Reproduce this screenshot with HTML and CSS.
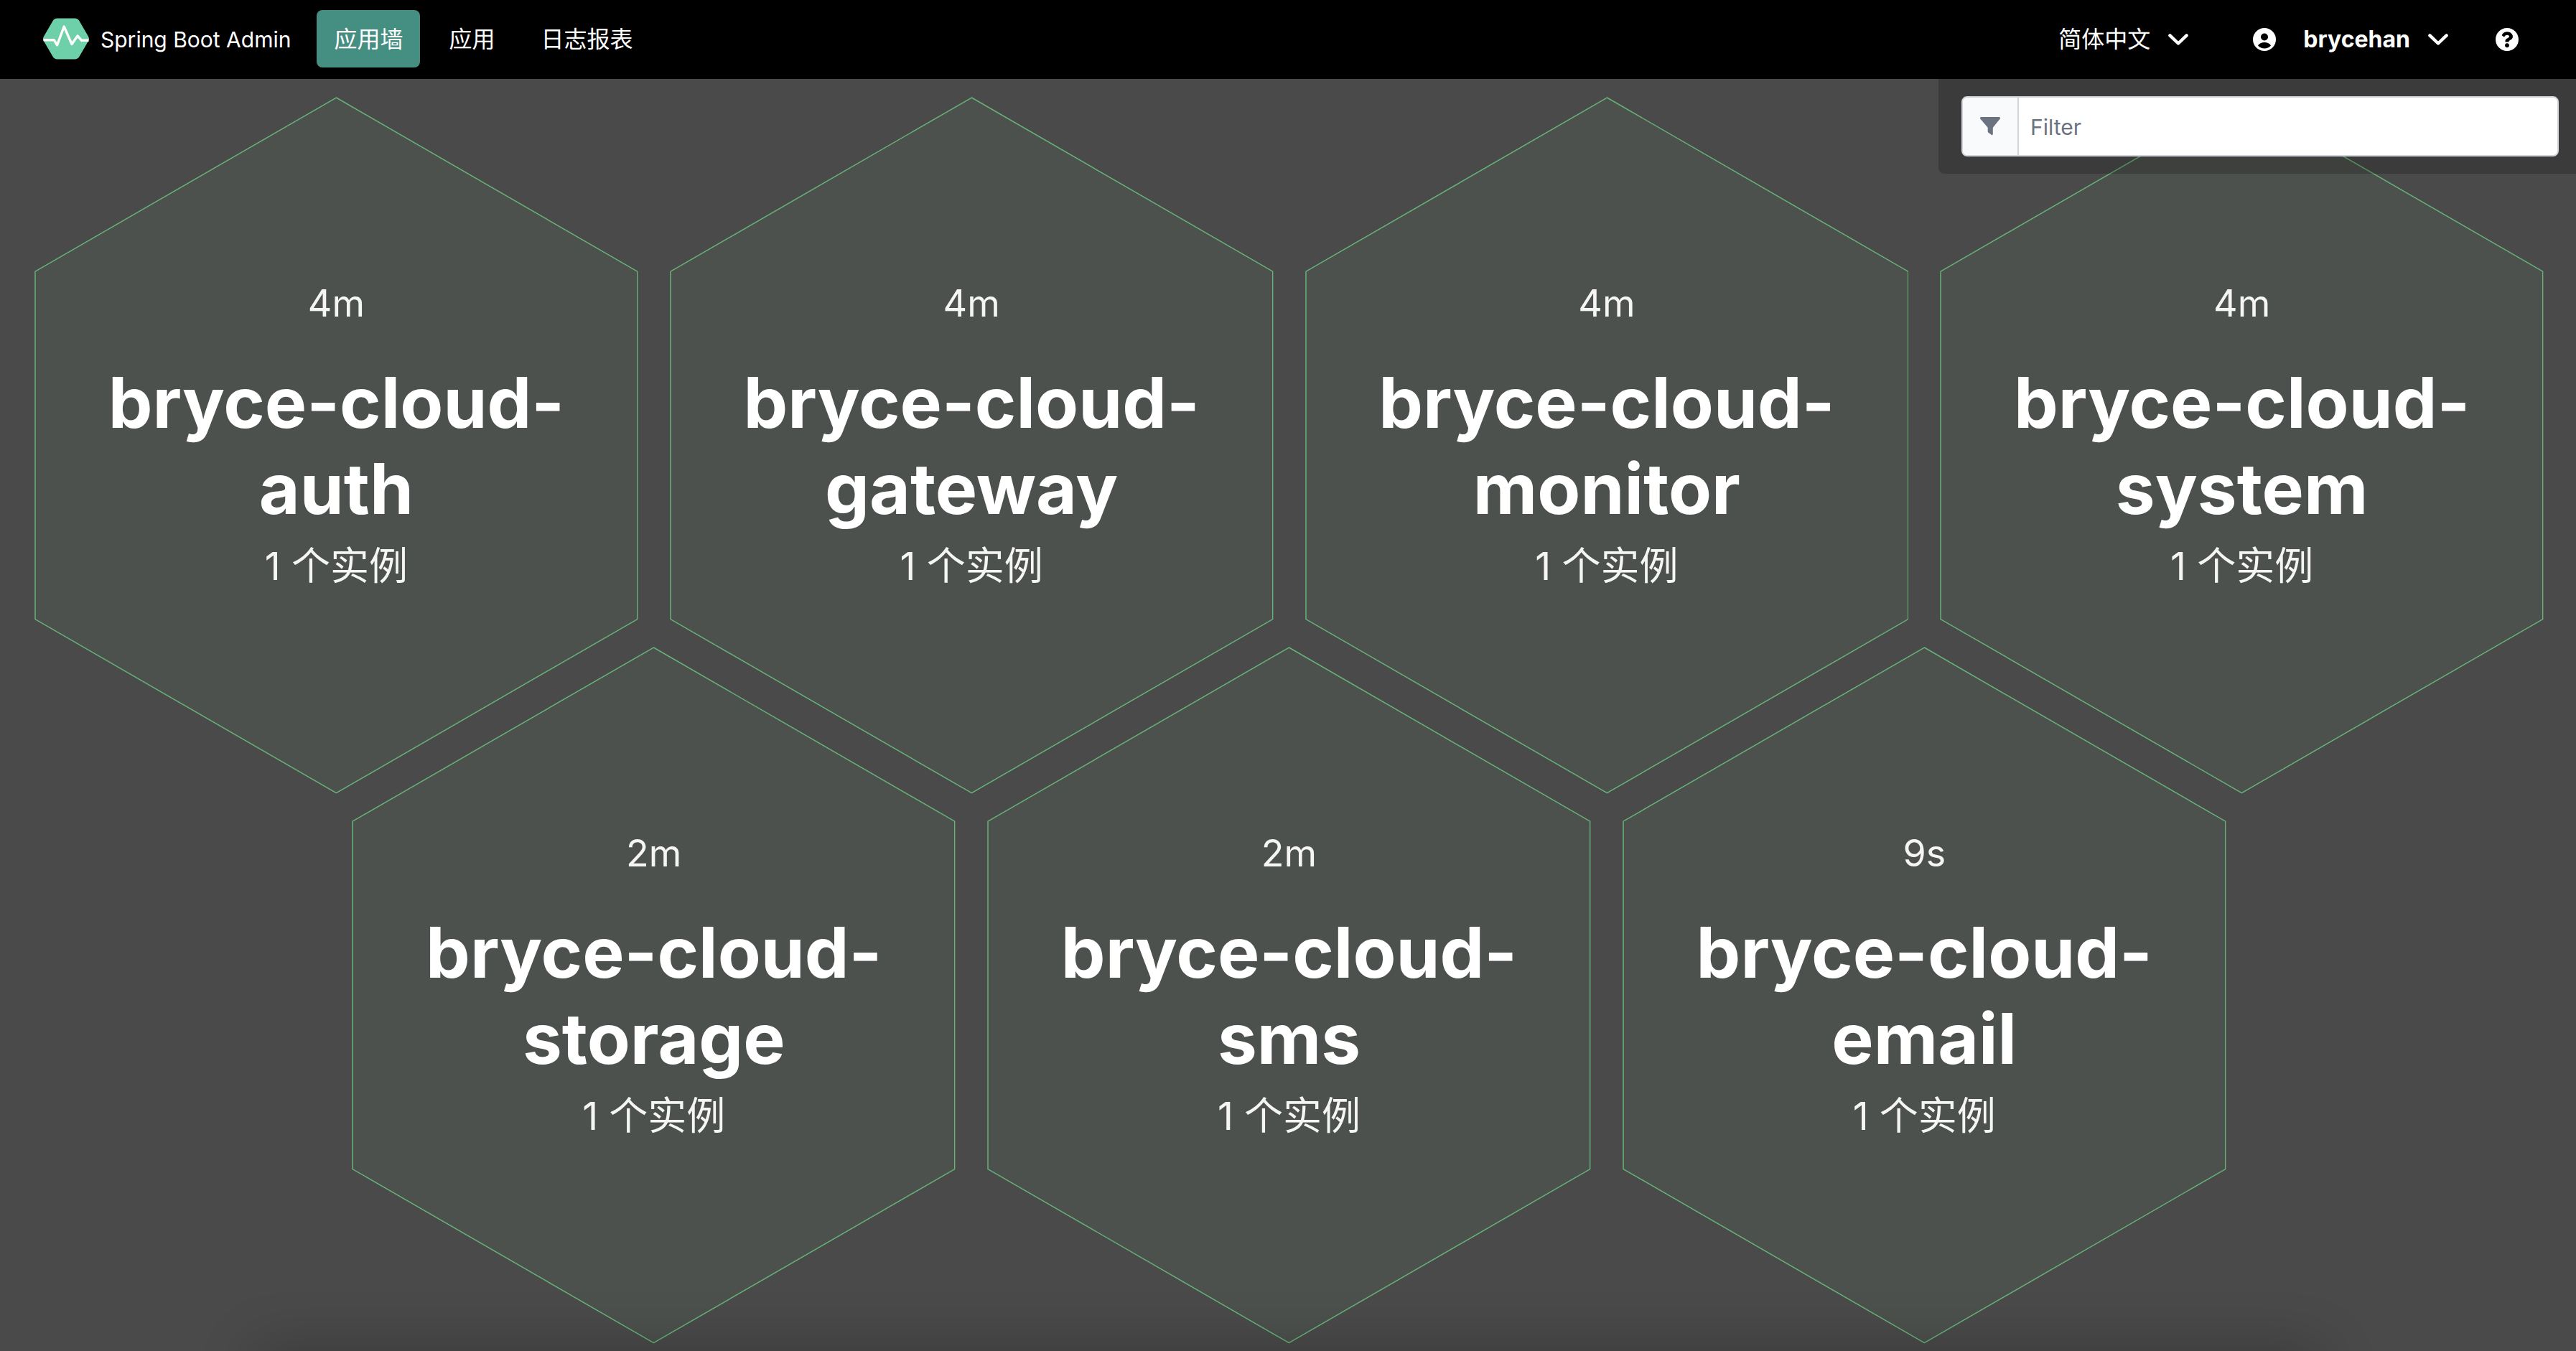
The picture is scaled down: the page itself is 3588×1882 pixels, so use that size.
FILE: index.html
```html
<!DOCTYPE html>
<html lang="zh-CN">
<head>
<meta charset="utf-8">
<meta name="viewport" content="width=device-width, initial-scale=1">
<title>Spring Boot Admin</title>
<link rel="stylesheet" href="styles.css">
</head>
<body>
<svg class="defs" width="0" height="0" aria-hidden="true">
  <symbol id="hex" viewBox="0 0 841 971" preserveAspectRatio="none">
    <polygon stroke-width="1.5" points="420.500,1 840,243.250 840,727.750 420.500,970 1,727.750 1,243.250"/>
  </symbol>
  <symbol id="chevron" viewBox="0 0 28 16">
    <path fill="none" stroke="#fff" stroke-width="4.400" stroke-linecap="round" stroke-linejoin="round" d="M2.400 2.400L14 13.500L25.600 2.400"/>
  </symbol>
</svg>
<header class="navbar">
  <a class="brand" href="#">
    <svg class="logo" viewBox="0 0 64 58" aria-hidden="true">
      <path fill="#6dd0a8" d="M20 0.500h24c3 0 5 1.200 6.500 3.700l12.500 21.500c1.300 2.200 1.300 4.400 0 6.600l-12.500 21.500c-1.500 2.500-3.500 3.700-6.500 3.700h-24c-3 0-5-1.200-6.500-3.700l-12.500-21.500c-1.300-2.200-1.300-4.400 0-6.600l12.500-21.500c1.500-2.500 3.500-3.700 6.500-3.700z"/>
      <path fill="none" stroke="#fff" stroke-width="3.400" stroke-linejoin="round" d="M0.500 30.800H15.300L19.600 37.800L29.200 12L40 36.500L48 25L53.500 31.200H63.500"/>
    </svg>
    <span>Spring Boot Admin</span>
  </a>
  <nav class="menu">
    <a class="item active" href="#wall">应用墙</a>
    <a class="item" href="#applications">应用</a>
    <a class="item" href="#journal">日志报表</a>
  </nav>
  <div class="tools">
    <button class="tool" type="button">简体中文 <svg class="chevron" aria-hidden="true"><use href="#chevron"/></svg></button>
    <button class="tool user" type="button">
      <svg class="glyph" viewBox="0 0 32 32" aria-hidden="true"><circle cx="16" cy="16" r="16" fill="#fff"/><circle cx="16" cy="12.500" r="5" fill="#000"/><path d="M7 24.500c1.500-3 5-4.500 9-4.500s7.500 1.500 9 4.500c-2.300 2.500-5.500 4-9 4s-6.700-1.500-9-4z" fill="#000"/></svg>
      <strong>brycehan</strong>
      <svg class="chevron" aria-hidden="true"><use href="#chevron"/></svg>
    </button>
    <button class="tool help" type="button" aria-label="Help">
      <svg class="glyph" viewBox="8 8 496 496" aria-hidden="true"><path fill="#fff" d="M504 256c0 136.997-111.043 248-248 248S8 392.997 8 256C8 119.083 119.043 8 256 8s248 111.083 248 248zM262.655 90c-54.497 0-89.255 22.957-116.549 63.758-3.536 5.286-2.353 12.415 2.715 16.258l34.699 26.310c5.205 3.947 12.621 3.008 16.665-2.122 17.864-22.658 30.113-35.797 57.303-35.797 20.429 0 45.698 13.148 45.698 32.958 0 14.976-12.363 22.667-32.534 33.976C247.128 238.528 216 254.941 216 296v4c0 6.627 5.373 12 12 12h56c6.627 0 12-5.373 12-12v-1.333c0-28.462 83.186-29.647 83.186-106.667 0-58.002-60.165-102-116.531-102zM256 338c-25.365 0-46 20.635-46 46 0 25.364 20.635 46 46 46s46-20.636 46-46c0-25.365-20.635-46-46-46z"/></svg>
    </button>
  </div>
</header>
<form class="filter" role="search">
  <div class="field">
    <label class="addon" for="filter"><svg viewBox="0 0 28 26" aria-label="Filter"><path fill="#6b7280" d="M1.500 0h25c1.400 0 2 1.500 1.200 2.600L17.800 14.800V24c0 1-1 1.500-1.800 1l-4.700-3.500c-.4-.3-.6-.7-.6-1.200V14.800L.3 2.600C-.5 1.500.1 0 1.500 0z"/></svg></label>
    <input id="filter" type="text" placeholder="Filter">
  </div>
</form>
<main class="wall">
  <div class="row">
    <a class="hex" href="#auth"><svg class="shape" aria-hidden="true"><use href="#hex"/></svg><span class="meta uptime">4m</span><h2>bryce-cloud-auth</h2><span class="meta">1 个实例</span></a>
    <a class="hex" href="#gateway"><svg class="shape" aria-hidden="true"><use href="#hex"/></svg><span class="meta uptime">4m</span><h2>bryce-cloud-gateway</h2><span class="meta">1 个实例</span></a>
    <a class="hex" href="#monitor"><svg class="shape" aria-hidden="true"><use href="#hex"/></svg><span class="meta uptime">4m</span><h2>bryce-cloud-monitor</h2><span class="meta">1 个实例</span></a>
    <a class="hex" href="#system"><svg class="shape" aria-hidden="true"><use href="#hex"/></svg><span class="meta uptime">4m</span><h2>bryce-cloud-system</h2><span class="meta">1 个实例</span></a>
  </div>
  <div class="row">
    <a class="hex" href="#storage"><svg class="shape" aria-hidden="true"><use href="#hex"/></svg><span class="meta uptime">2m</span><h2>bryce-cloud-storage</h2><span class="meta">1 个实例</span></a>
    <a class="hex" href="#sms"><svg class="shape" aria-hidden="true"><use href="#hex"/></svg><span class="meta uptime">2m</span><h2>bryce-cloud-sms</h2><span class="meta">1 个实例</span></a>
    <a class="hex" href="#email"><svg class="shape" aria-hidden="true"><use href="#hex"/></svg><span class="meta uptime">9s</span><h2>bryce-cloud-email</h2><span class="meta">1 个实例</span></a>
  </div>
</main>
</body>
</html>
```
FILE: styles.css
```css
* { box-sizing: border-box; }

body {
  margin: 0;
  min-height: 100vh;
  overflow-x: hidden;
  background: #4a4a4a;
  color: #fff;
  font: 32px/48px Inter, "Noto Sans CJK SC", sans-serif;
}

a { color: inherit; text-decoration: none; }

.defs { position: absolute; }

.navbar {
  display: flex;
  align-items: center;
  height: 110px;
  padding: 0 56px 2px 60px;
  background: #000;
}

.brand {
  display: flex;
  align-items: center;
  gap: 16px;
  margin-right: 36px;
  font-size: 30px;
}

.brand span { padding-top: 2px; }

.logo { width: 64px; height: 58px; }

.menu { display: flex; gap: 16px; }

.item {
  padding: 17px 24px 15px;
  border-radius: 8px;
}

.item.active { background: #458f82; }

.tools {
  display: flex;
  margin-left: auto;
}

.tool {
  display: flex;
  align-items: center;
  padding: 17px 24px 15px;
  border: 0;
  background: none;
  color: #fff;
  font: inherit;
}

.user { margin-left: 42px; }
.user strong { margin-left: 38px; font-weight: 700; }
.help { margin-left: 18px; }

.chevron {
  width: 28px;
  height: 16px;
  margin-left: 25px;
}

.glyph { width: 32px; height: 32px; }

.filter {
  position: absolute;
  z-index: 2;
  top: 110px;
  right: 0;
  width: 888px;
  padding: 24px 24px 24px 32px;
  border-radius: 0 0 0 8px;
  background: rgba(0, 0, 0, .2);
}

.field {
  display: flex;
  height: 84px;
  overflow: hidden;
  border: 2px solid #d1d5db;
  border-radius: 8px;
  background: #fff;
}

.addon {
  display: flex;
  align-items: center;
  justify-content: center;
  width: 78px;
  border-right: 2px solid #d1d5db;
  background: #f9fafb;
}

.addon svg { width: 28px; height: 26px; }

.field input {
  flex: 1;
  min-width: 0;
  padding: 2px 16px 0;
  border: 0;
  outline: 0;
  background: none;
  color: #111827;
  font: inherit;
  font-size: 30px;
}

.field input::placeholder { color: #6b7280; opacity: 1; }

.wall { padding: 25px 45px 8px 48px; }

.row {
  display: flex;
  justify-content: center;
  gap: 44px;
}

.row + .row { margin-top: -5.86%; }

.hex {
  position: relative;
  isolation: isolate;
  display: flex;
  flex-direction: column;
  align-items: center;
  width: calc((100% - 132px) / 4);
  aspect-ratio: 841 / 971;
  padding-top: 248px;
  text-align: center;
  pointer-events: none;
}

.shape {
  position: absolute;
  z-index: -1;
  inset: 0;
  width: 100%;
  height: 100%;
  fill: rgba(106, 144, 106, .1);
  stroke: #67b279;
  pointer-events: fill;
}

.meta {
  color: #f5f5f5;
  font-size: 54px;
  line-height: 80px;
}

.uptime { font-size: 52px; }

.hex h2 {
  width: 700px;
  margin: 38px 0 8px;
  font-size: 98px;
  font-weight: 700;
  line-height: 120px;
}

/* Soft shade along the lower edge of the window */
body::after {
  content: "";
  position: fixed;
  top: 100%;
  left: 360px;
  right: 360px;
  height: 80px;
  box-shadow: 0 0 80px rgba(0, 0, 0, .25);
  pointer-events: none;
}
```
